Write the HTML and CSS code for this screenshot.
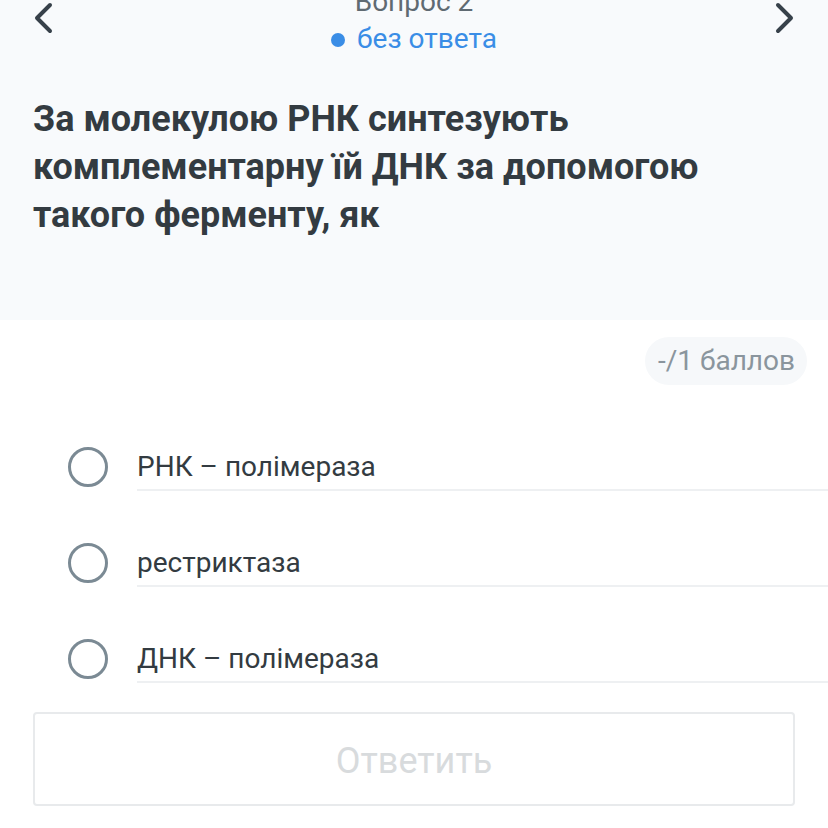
FILE: index.html
```html
<!DOCTYPE html>
<html lang="ru">
<head>
    <meta charset="UTF-8">
    <meta name="viewport" content="width=device-width, initial-scale=1.0">
    <title>Вопрос 2</title>
    <link rel="stylesheet" href="styles.css">
</head>
<body>
    <!-- шапка вопроса -->
    <div class="question-head">
        <div class="nav">
            <svg class="nav-arrow" width="20" height="32" viewBox="0 0 20 32">
                <polyline points="17,3 4,16 17,29" fill="none" stroke="#37414a" stroke-width="4" stroke-linecap="round" stroke-linejoin="round"/>
            </svg>
            <div class="nav-center">
                <div class="nav-title">Вопрос 2</div>
                <div class="nav-status"><span class="status-dot"></span>без ответа</div>
            </div>
            <svg class="nav-arrow" width="20" height="32" viewBox="0 0 20 32">
                <polyline points="3,3 16,16 3,29" fill="none" stroke="#37414a" stroke-width="4" stroke-linecap="round" stroke-linejoin="round"/>
            </svg>
        </div>
        <div class="question-text">За молекулою РНК синтезують комплементарну їй ДНК за допомогою такого ферменту, як</div>
    </div>

    <!-- баллы -->
    <div class="score-row">
        <div class="score">-/1 баллов</div>
    </div>

    <!-- варианты ответа -->
    <div class="options">
        <div class="option">
            <span class="radio"></span>
            <span class="option-label">РНК – полімераза</span>
        </div>
        <div class="option">
            <span class="radio"></span>
            <span class="option-label">рестриктаза</span>
        </div>
        <div class="option">
            <span class="radio"></span>
            <span class="option-label">ДНК – полімераза</span>
        </div>
    </div>

    <button class="submit" disabled>Ответить</button>
</body>
</html>
```

FILE: styles.css
```css
/* общие стили */
* {
    margin: 0;
    padding: 0;
    box-sizing: border-box;
}

body {
    font-family: Roboto, "Noto Sans", Arial, sans-serif;
    background-color: #ffffff;
    color: #333b41;
    width: 828px;
    height: 828px;
    overflow: hidden;
}

/* шапка */
.question-head {
    display: flow-root;
    background-color: #f8fafc;
    height: 320px;
    padding: 0 33px 0 33px;
}

.nav {
    display: flex;
    justify-content: space-between;
    align-items: flex-start;
    margin-top: -13px;
}

.nav-arrow {
    margin-top: 15px;
    flex-shrink: 0;
}

.nav-center {
    display: flex;
    flex-direction: column;
    align-items: center;
}

.nav-title {
    font-size: 28px;
    line-height: 30px;
    color: #5f6a72;
}

.nav-status {
    display: flex;
    align-items: center;
    margin-top: 7px;
    font-size: 28px;
    line-height: 30px;
    color: #3a8de6;
}

.status-dot {
    width: 14px;
    height: 14px;
    border-radius: 50%;
    background-color: #3a8de6;
    margin-right: 12px;
    margin-top: 1px;
}

.question-text {
    margin-top: 41px;
    font-size: 36px;
    line-height: 48px;
    font-weight: bold;
    color: #333b41;
    padding-right: 90px;
}

/* баллы */
.score-row {
    display: flex;
    justify-content: flex-end;
    padding: 17px 21px 0 0;
}

.score {
    background-color: #f6f8fa;
    color: #8a959d;
    font-size: 28px;
    line-height: 48px;
    padding: 0 12px 0 13px;
    border-radius: 24px;
}

/* варианты */
.options {
    margin-top: 10px;
}

.option {
    display: flex;
    align-items: flex-start;
    padding-left: 68px;
}

.radio {
    width: 40px;
    height: 40px;
    border: 3px solid #7b8a94;
    border-radius: 50%;
    margin-top: 52px;
    flex-shrink: 0;
}

.option-label {
    flex: 1;
    margin-left: 29px;
    padding: 57px 0 7px 0;
    font-size: 28px;
    line-height: 30px;
    color: #333b41;
    border-bottom: 2px solid #eef0f2;
}

/* кнопка */
.submit {
    display: block;
    width: 762px;
    height: 94px;
    margin: 29px 0 0 33px;
    padding-top: 4px;
    background-color: #ffffff;
    border: 2px solid #e8eaec;
    border-radius: 4px;
    font-family: Roboto, "Noto Sans", Arial, sans-serif;
    font-size: 36px;
    color: #d8dbdd;
}
```
